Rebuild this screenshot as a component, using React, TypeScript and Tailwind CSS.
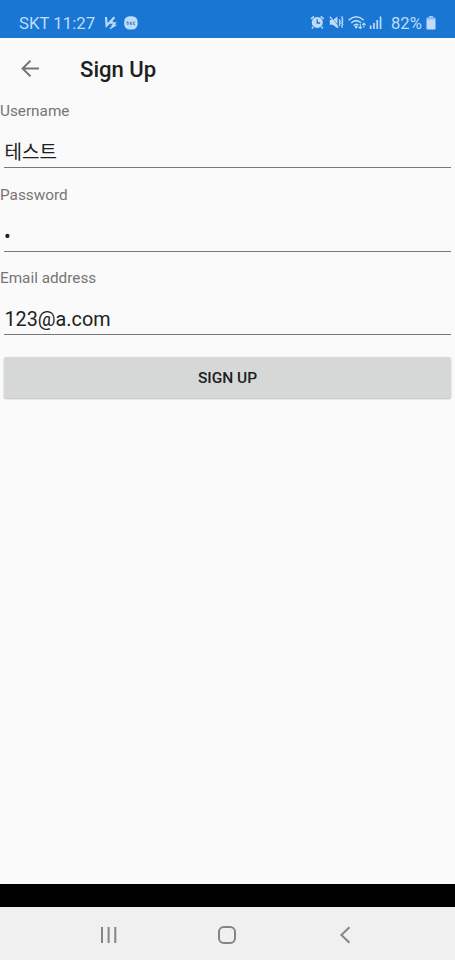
const ICON = '#bfdcfa';

function StatusBar() {
  return (
    <header className="flex h-[38px] shrink-0 items-center bg-[#1976d2] pt-[7px] pl-[19px] text-[16.6px] leading-[31px] text-[#bfdcfa]">
      <span className="w-[83px] pt-[1px] text-[16.8px] whitespace-nowrap">SKT 11:27</span>
      <svg className="ml-[1px]" width="15" height="16" viewBox="0 0 15 16" fill="none" stroke={ICON}>
        <path d="M3 2 3.6 10.6 11.4 2.2" strokeWidth="2.1" />
        <path d="M9.6 5.6 8 8h4l-2.6 2.6h2.4L7 13.6" strokeWidth="1.5" />
      </svg>
      <svg className="ml-[6px]" width="14" height="14" viewBox="0 0 14 14" fill="none">
        <rect x="0.2" y="0.2" width="13.4" height="13.4" rx="5.3" fill={ICON} />
        <path d="M3.2 5v3.4h1.2q1-.8 0-2H3.2M8.2 6.2H6.4v2.2h1.8M6.5 7.3h1.4M11.2 6.2H9.5v2.2h1.7" stroke="#4485d0" strokeWidth=".9" />
      </svg>
      <div className="ml-auto flex items-center">
        <svg width="15" height="15" viewBox="0 0 15 15" fill="none" stroke={ICON}>
          <circle cx="7.3" cy="7.4" r="5.5" fill={ICON} stroke="none" />
          <path d="M1 4 4 1.3M10.7 1.3l3 2.7M3.2 11.8 2 13.4M11.5 11.8l1.2 1.6" strokeWidth="1.6" />
          <path d="M7.2 4.3v3.7h3" stroke="#1976d2" strokeWidth="1.3" />
        </svg>
        <svg className="ml-[4px]" width="15" height="15" viewBox="0 0 15 15" fill="none" stroke={ICON}>
          <path d="M.8 4.9h3L8.4 1.6v11.6L3.8 9.8h-3z" fill={ICON} stroke="none" />
          <path d="m1.8 1.4 7.6 9.4" stroke="#1976d2" strokeWidth=".7" />
          <path d="m.9 1.6 8.4 11" strokeWidth="1.3" />
          <path d="M10.5 4.2v1.3l.7 1-.7 1 .7 1-.7 1V11M13 1.2v1.6l.7 1.3-.7 1.3.7 1.4-.7 1.3.7 1.3-.7 1.3v2" strokeWidth="1.3" />
        </svg>
        <svg className="ml-[4px]" width="19" height="15" viewBox="0 0 19 15" fill="none" stroke={ICON}>
          <path d="M.6 5.2Q8.2-1.7 15.8 5.2M3.2 8Q8.2 3.3 13.2 8M5.8 10.6q2.4-2.3 4.6-.4" strokeWidth="1.5" />
          <circle cx="8.2" cy="12" r="1.4" fill={ICON} stroke="none" />
          <path d="M12.3 8.9v4.6m-1.7-1.7 1.7 1.7 1.7-1.7M15.9 12.6V8.2m-1.7 1.7 1.7-1.7 1.7 1.7" strokeWidth="1.1" />
        </svg>
        <svg className="ml-[2px]" width="14" height="15" viewBox="0 0 14 15" fill={ICON}>
          <path d="M.8 10.5h1.7V14H.8zM4.1 8h1.7v6H4.1zM7.4 5h1.7v9H7.4zM10.7 1.5h1.7V14h-1.7z" />
        </svg>
        <span className="ml-[8px] w-[31px] pt-[1px] text-[16.6px] whitespace-nowrap">82%</span>
        <svg className="mr-[19px] ml-[4px]" width="10" height="14" viewBox="0 0 10 14" fill={ICON}>
          <path d="M3 0h4v1.8H3z" opacity=".8" />
          <rect x=".5" y="1.5" width="9" height="12" rx="1" />
          <path d="M.5 1.5h9v2h-9z" fill="#1976d2" opacity=".3" />
        </svg>
      </div>
    </header>
  );
}

function Field({ label, value, valueClass = 'text-[19.8px] pb-[2px] pl-[0.5px]' }: { label: string; value: string; valueClass?: string }) {
  return (
    <div className="h-[83.6px]">
      <div className="h-[22px] pt-[1px] text-[15.3px] leading-[21px] text-[#757575]">{label}</div>
      <div className={`mx-1 flex h-[46px] items-end border-b-[1.3px] border-[#787878] leading-[24px] text-[#202020] ${valueClass}`}>
        {value}
      </div>
    </div>
  );
}

export default function App() {
  return (
    <div className="flex h-[960px] w-[455px] flex-col overflow-hidden bg-[#fafafa] font-[Roboto,'Noto_Sans_CJK_KR',sans-serif]">
      <StatusBar />
      <div className="flex h-[62px] shrink-0 items-center pl-[21px]">
        <svg className="-mt-[1px]" width="19" height="19" viewBox="0 0 19 19" fill="none" stroke="#737373" strokeWidth="2">
          <path d="M18 9.5H2M9.5 1.6 1.6 9.5l7.9 7.9" />
        </svg>
        <h1 className="ml-[40px] pt-[1px] text-[22.1px] font-medium text-[#202020]">Sign Up</h1>
      </div>
      <main className="flex-1">
        <Field label="Username" value="테스트" valueClass="pb-[2px] pl-[0.5px] text-[19px]" />
        <Field label="Password" value="•" valueClass="pb-[2px] text-[19.8px]" />
        <Field label="Email address" value="123@a.com" />
        <button className="mx-1 mt-[6px] block h-[41px] w-[447px] rounded-[2px] bg-[#d6d8d7] pt-[2px] text-[15.5px] font-medium text-[#202020] shadow-[0_1px_2px_rgba(0,0,0,0.25)]">
          SIGN UP
        </button>
      </main>
      <div className="h-[23px] shrink-0 bg-black" />
      <nav className="flex h-[53px] shrink-0 items-center bg-[#f0f0f0] pt-[3px] pl-[100px]">
        <svg width="18" height="18" viewBox="0 0 18 18" stroke="#858585" strokeWidth="2">
          <path d="M2 1v16M8.6 1v16M15.3 1v16" />
        </svg>
        <svg className="ml-[99px]" width="20" height="20" viewBox="0 0 20 20" fill="none" stroke="#858585" strokeWidth="2">
          <rect x="2" y="2" width="16" height="16" rx="4.8" />
        </svg>
        <svg className="ml-[102px]" width="12" height="18" viewBox="0 0 12 18" fill="none" stroke="#858585" strokeWidth="2">
          <path d="M10.4 1.2 2.4 9l8 7.8" />
        </svg>
      </nav>
    </div>
  );
}
